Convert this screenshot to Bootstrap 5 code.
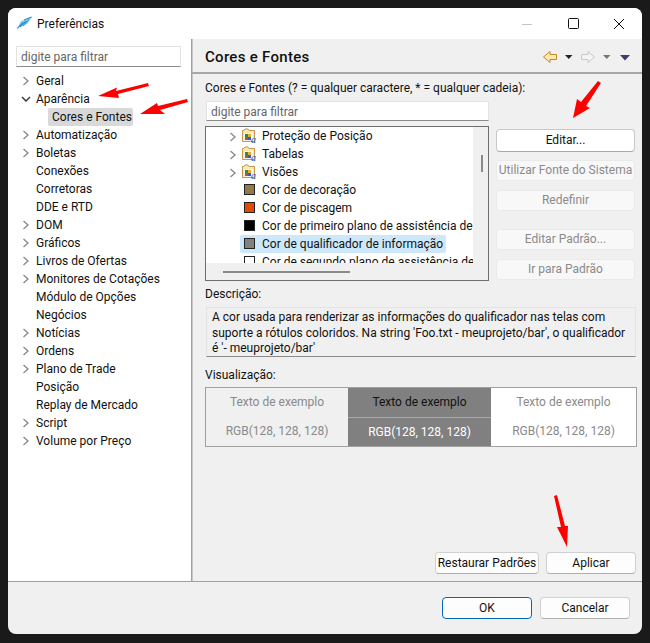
<!DOCTYPE html>
<html lang="pt"><head><meta charset="utf-8"><title>Preferências</title>
<link href="https://cdn.jsdelivr.net/npm/bootstrap@5.3.0/dist/css/bootstrap.min.css" rel="stylesheet">
<style>
html,body{height:100%}
body{background:#1a1a1a;padding:8px;font:12px/18px Roboto,sans-serif;color:#111;overflow:hidden}
.win{width:634px;height:626px;background:#f0f0f0;border-radius:8px;overflow:hidden;position:relative}
.ttl{height:31px;background:#fff;padding:0 0 0 8px}
.ttl-t{margin-left:4px}
.wc{width:46px;text-align:center;line-height:10px}
.main{height:543px;border-bottom:1px solid #a0a0a0}
.side{width:183px;background:#fff;padding:7px 8px}
.vsep{width:1px;background:#a0a0a0;box-shadow:1px 0 0 #c8c8c8}
.filter{height:21px;border:1px solid #e3e3e3;border-bottom-color:#8a8a8a;background:#fff;color:#666;padding:0 4px;line-height:21px;font-size:12px}
.side .filter{width:165px;margin-bottom:5px}
.tr{height:18px;position:relative;padding-left:20px;white-space:nowrap}
.chev{position:absolute;left:6px;top:4px}
.chev-d{left:5px}
.tr-sel{margin-left:32px;padding:0 4px;width:85px;height:18px;white-space:nowrap;background:#d9d9d9;border-radius:2px}
.cont{flex:1;min-width:0}
.phead{height:35px;border-bottom:2px solid #a8a8a8;padding:2px 12px 0 13px}
.ptitle{font-weight:500;font-size:15px;letter-spacing:.3px}
.body-r{padding:5px 6px 0 13px}
.lbl{height:18px}
.pick{width:283px;height:20px;margin:4px 0 5px 1px;line-height:20px}
.tbox{width:284px;height:155px;border:1px solid #6e6e6e;background:#f0f0f0;position:relative;overflow:hidden}
.tarea{width:267px;height:136px;background:#fff;overflow:hidden}
.ti{height:18px;position:relative;padding-left:56px;white-space:nowrap}
.ti svg.fi{position:absolute;left:36px;top:1px}
.ti svg.ch{position:absolute;left:23px;top:5px}
.sw{position:absolute;left:38px;top:3px;width:11px;height:11px;border:1px solid #222}
.ti-sel::before{content:"";position:absolute;left:34px;top:0;width:206px;height:18px;background:#cde8fb;border-radius:2px}
.ti-sel span{position:relative}
.vb{position:absolute;left:275px;top:28px;width:2px;height:17px;background:#8a8a8a}
.hb{position:absolute;left:17px;top:144px;width:127px;height:2px;background:#8a8a8a}
.bcol{width:139px;margin-left:7px;padding-top:3px}
.wb{display:block;width:100%;height:21px;padding:0;margin:0;font:12px/19px Roboto,sans-serif;border:1px solid #e4e4e4;background:#fbfbfb;color:#8a8a8a;border-radius:4px;white-space:nowrap;overflow:hidden}
.wb:disabled{background:#f8f8f8;color:#8a8a8a;border-color:#eaeaea;opacity:1}
.wb-on{height:23px;background:#fff;color:#111;border-color:#c8c8c8;border-bottom-color:#aaa;line-height:21px}
.wb-act{background:#fdfdfd;color:#111;border-color:#d0d0d0;border-bottom-color:#b0b0b0;height:22px;line-height:21px}
.g9{margin-top:9px}
.lbl-d{margin-top:4px}
.lbl-v{margin-top:9px}
.desc{width:430px;height:50px;margin:4px 0 0 1px;border:1px solid #e4e4e4;border-bottom-color:#8a8a8a;padding:2px 5px;line-height:15.500px;background:#f0f0f0}
.prev{width:432px;height:60px;border:1px solid #a0a0a0;margin-top:3px}
.pc{text-align:center;color:#8a8a8a;flex:none}
.pc1{width:142px}
.pc2{width:143px;background:#808080;color:#111}
.pc3{width:145px;background:#fff}
.pc div{height:29px;line-height:28px}
.pc div+div{height:29px;line-height:28px}
.pc2 div+div{border-top:1px solid #a8a8a8;color:#fff}
.foot{padding:15px 12px 0 0}
.wsp{margin-top:18px}
.rdf{margin:105px 0 0 0;gap:7px}
.r1{width:104px;flex:none}.r2{width:90px;flex:none}
.r3{width:90px;flex:none;border-color:#0067c0!important}.r4{width:90px;flex:none}
.arrows{position:absolute;left:-8px;top:-8px;width:650px;height:643px;pointer-events:none}
</style></head><body>
<div class="win">
 <div class="ttl d-flex align-items-center">
  <svg width="17" height="15" viewBox="0 0 17 15"><path d="M0 14 5 5 16.500 .5 11 8 4 10z" fill="#8fd0ee"/><path d="M1.500 12.500 7 6M4 11 10 5M7 10 13 3.500M8 4 15.500 1" stroke="#2f8fd0" stroke-width="1.100" fill="none"/></svg>
  <span class="ttl-t">Preferências</span>
  <div class="ms-auto d-flex">
   <div class="wc"><svg width="10" height="10"><path d="M0 5.500h10" stroke="#c4c4c4"/></svg></div>
   <div class="wc"><svg width="11" height="11"><rect x=".5" y=".5" width="10" height="10" rx="1" fill="none" stroke="#111"/></svg></div>
   <div class="wc"><svg width="10" height="10"><path d="M0 0 10 10M10 0 0 10" stroke="#111"/></svg></div>
  </div>
 </div>
 <div class="main d-flex">
  <div class="side">
   <div class="filter">digite para filtrar</div>
   <div class="tr"><svg class="chev" width="8" height="10"><path d="M1.500 1 6 5 1.500 9" fill="none" stroke="#8c8c8c" stroke-width="1.400"/></svg>Geral</div>
   <div class="tr"><svg class="chev chev-d" width="10" height="10"><path d="M1 3 5 7 9 3" fill="none" stroke="#333" stroke-width="1.400"/></svg>Aparência</div>
   <div class="tr-sel">Cores e Fontes</div>
   <div class="tr"><svg class="chev" width="8" height="10"><path d="M1.500 1 6 5 1.500 9" fill="none" stroke="#8c8c8c" stroke-width="1.400"/></svg>Automatização</div>
   <div class="tr"><svg class="chev" width="8" height="10"><path d="M1.500 1 6 5 1.500 9" fill="none" stroke="#8c8c8c" stroke-width="1.400"/></svg>Boletas</div>
   <div class="tr">Conexões</div>
   <div class="tr">Corretoras</div>
   <div class="tr">DDE e RTD</div>
   <div class="tr"><svg class="chev" width="8" height="10"><path d="M1.500 1 6 5 1.500 9" fill="none" stroke="#8c8c8c" stroke-width="1.400"/></svg>DOM</div>
   <div class="tr"><svg class="chev" width="8" height="10"><path d="M1.500 1 6 5 1.500 9" fill="none" stroke="#8c8c8c" stroke-width="1.400"/></svg>Gráficos</div>
   <div class="tr"><svg class="chev" width="8" height="10"><path d="M1.500 1 6 5 1.500 9" fill="none" stroke="#8c8c8c" stroke-width="1.400"/></svg>Livros de Ofertas</div>
   <div class="tr"><svg class="chev" width="8" height="10"><path d="M1.500 1 6 5 1.500 9" fill="none" stroke="#8c8c8c" stroke-width="1.400"/></svg>Monitores de Cotações</div>
   <div class="tr">Módulo de Opções</div>
   <div class="tr">Negócios</div>
   <div class="tr"><svg class="chev" width="8" height="10"><path d="M1.500 1 6 5 1.500 9" fill="none" stroke="#8c8c8c" stroke-width="1.400"/></svg>Notícias</div>
   <div class="tr"><svg class="chev" width="8" height="10"><path d="M1.500 1 6 5 1.500 9" fill="none" stroke="#8c8c8c" stroke-width="1.400"/></svg>Ordens</div>
   <div class="tr"><svg class="chev" width="8" height="10"><path d="M1.500 1 6 5 1.500 9" fill="none" stroke="#8c8c8c" stroke-width="1.400"/></svg>Plano de Trade</div>
   <div class="tr">Posição</div>
   <div class="tr">Replay de Mercado</div>
   <div class="tr"><svg class="chev" width="8" height="10"><path d="M1.500 1 6 5 1.500 9" fill="none" stroke="#8c8c8c" stroke-width="1.400"/></svg>Script</div>
   <div class="tr"><svg class="chev" width="8" height="10"><path d="M1.500 1 6 5 1.500 9" fill="none" stroke="#8c8c8c" stroke-width="1.400"/></svg>Volume por Preço</div>
  </div>
  <div class="vsep"></div>
  <div class="cont d-flex flex-column">
   <div class="phead d-flex align-items-center">
    <span class="ptitle">Cores e Fontes</span>
    <svg class="ms-auto" width="92" height="14" viewBox="0 0 92 14"><path d="M5.500 7 12 1.500V4.500H18.500V9.500H12V12.500z" fill="#fde9ae" stroke="#c08a20"/><path d="M27 5h7.500l-3.700 4z" fill="#222"/><path d="M56.500 7 50 1.500V4.500H43.500V9.500H50V12.500z" fill="#f4f4f4" stroke="#c8c8c8"/><path d="M65 5h7.500l-3.700 4z" fill="#777"/><path d="M82 5h10l-5 5.500z" fill="#3f3a70"/></svg>
   </div>
   <div class="body-r">
    <div class="lbl">Cores e Fontes (? = qualquer caractere, * = qualquer cadeia):</div>
    <div class="filter pick">digite para filtrar</div>
    <div class="d-flex">
     <div class="tbox">
      <div class="tarea">
       <div class="ti"><svg class="ch" width="8" height="10"><path d="M1.500 1 6 5 1.500 9" fill="none" stroke="#8c8c8c" stroke-width="1.400"/></svg><svg class="fi" width="16" height="16" viewBox="0 0 16 16"><path d="M.5 13.500V2.500H2L3 1H6L7 2.500H12.500V13.500z" fill="#fbe7b2" stroke="#c8964a"/><rect x="2" y="5" width="9" height="8" fill="#f4f4f4"/><rect x="3" y="6" width="3" height="3" fill="#3a8a3a"/><rect x="6" y="6" width="3" height="3" fill="#e0b030"/><rect x="3" y="9" width="3" height="3" fill="#c84a3a"/><rect x="6" y="9" width="3" height="3" fill="#3a5ac8"/><text x="9" y="14.500" font-size="10" font-style="italic" font-family="Liberation Serif" fill="#1f5aa0">a</text></svg>Proteção de Posição</div>
       <div class="ti"><svg class="ch" width="8" height="10"><path d="M1.500 1 6 5 1.500 9" fill="none" stroke="#8c8c8c" stroke-width="1.400"/></svg><svg class="fi" width="16" height="16" viewBox="0 0 16 16"><path d="M.5 13.500V2.500H2L3 1H6L7 2.500H12.500V13.500z" fill="#fbe7b2" stroke="#c8964a"/><rect x="2" y="5" width="9" height="8" fill="#f4f4f4"/><rect x="3" y="6" width="3" height="3" fill="#3a8a3a"/><rect x="6" y="6" width="3" height="3" fill="#e0b030"/><rect x="3" y="9" width="3" height="3" fill="#c84a3a"/><rect x="6" y="9" width="3" height="3" fill="#3a5ac8"/><text x="9" y="14.500" font-size="10" font-style="italic" font-family="Liberation Serif" fill="#1f5aa0">a</text></svg>Tabelas</div>
       <div class="ti"><svg class="ch" width="8" height="10"><path d="M1.500 1 6 5 1.500 9" fill="none" stroke="#8c8c8c" stroke-width="1.400"/></svg><svg class="fi" width="16" height="16" viewBox="0 0 16 16"><path d="M.5 13.500V2.500H2L3 1H6L7 2.500H12.500V13.500z" fill="#fbe7b2" stroke="#c8964a"/><rect x="2" y="5" width="9" height="8" fill="#f4f4f4"/><rect x="3" y="6" width="3" height="3" fill="#3a8a3a"/><rect x="6" y="6" width="3" height="3" fill="#e0b030"/><rect x="3" y="9" width="3" height="3" fill="#c84a3a"/><rect x="6" y="9" width="3" height="3" fill="#3a5ac8"/><text x="9" y="14.500" font-size="10" font-style="italic" font-family="Liberation Serif" fill="#1f5aa0">a</text></svg>Visões</div>
       <div class="ti"><i class="sw" style="background:#8f7a48"></i>Cor de decoração</div>
       <div class="ti"><i class="sw" style="background:#e04b00"></i>Cor de piscagem</div>
       <div class="ti"><i class="sw" style="background:#000"></i>Cor de primeiro plano de assistência de</div>
       <div class="ti ti-sel"><i class="sw" style="background:#808080;z-index:1"></i><span>Cor de qualificador de informação</span></div>
       <div class="ti"><i class="sw" style="background:#fff"></i>Cor de segundo plano de assistência de</div>
      </div>
      <i class="vb"></i><i class="hb"></i>
     </div>
     <div class="bcol d-flex flex-column">
      <button class="btn wb wb-on" type="button">Editar...</button>
      <button class="btn wb mt-2" type="button" disabled>Utilizar Fonte do Sistema</button>
      <button class="btn wb g9" type="button" disabled>Redefinir</button>
      <button class="btn wb wsp" type="button" disabled>Editar Padrão...</button>
      <button class="btn wb g9" type="button" disabled>Ir para Padrão</button>
     </div>
    </div>
    <div class="lbl lbl-d">Descrição:</div>
    <div class="desc">A cor usada para renderizar as informações do qualificador nas telas com suporte a rótulos coloridos. Na string 'Foo.txt - meuprojeto/bar', o qualificador é '- meuprojeto/bar'</div>
    <div class="lbl lbl-v">Visualização:</div>
    <div class="prev d-flex">
     <div class="pc pc1"><div>Texto de exemplo</div><div>RGB(128, 128, 128)</div></div>
     <div class="pc pc2"><div>Texto de exemplo</div><div>RGB(128, 128, 128)</div></div>
     <div class="pc pc3"><div>Texto de exemplo</div><div>RGB(128, 128, 128)</div></div>
    </div>
    <div class="d-flex justify-content-end rdf">
     <button class="btn wb wb-act r1" type="button">Restaurar Padrões</button>
     <button class="btn wb wb-act r2" type="button">Aplicar</button>
    </div>
   </div>
  </div>
 </div>
 <div class="foot d-flex justify-content-end gap-2">
  <button class="btn wb wb-act r3" type="button">OK</button>
  <button class="btn wb wb-act r4" type="button">Cancelar</button>
 </div>
 <svg class="arrows" viewBox="0 0 650 643" fill="#f00">
  <path d="M98 96 117 87.500 116 91 148 83 149 86 118 94 119 98z"/>
  <path d="M140 114 157 103 158 106 187 99 188 102 160 110 165 114z"/>
  <path d="M573 118 577 99 581 102 598 81 601 83 586 106 590 108z"/>
  <path d="M567 547 557 527 561 527 554 496 557 495 565 526 568 526z"/>
 </svg>
</div>
</body></html>
